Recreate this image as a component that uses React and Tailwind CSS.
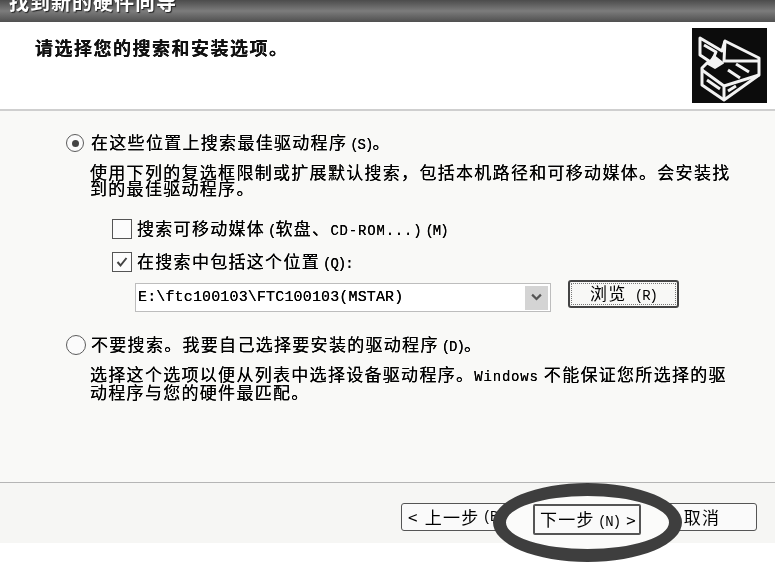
const CJK = "font-['Noto_Sans_CJK_SC','Liberation_Sans',sans-serif]";
const COMBO = "font-['Liberation_Mono',monospace] text-[15px] leading-none tracking-[0.15px]";
const LATIN = "font-['Liberation_Mono',monospace] text-[14px] leading-none tracking-[0.8px]";
const KEY = "ml-[3px] font-['Liberation_Mono',monospace] text-[14px] leading-none tracking-[-1px]";

function Radio({ checked, big }) {
  return (
    <span className={`flex shrink-0 items-center justify-center rounded-full border-[1.5px] border-[#5c5c5c] bg-[#fbfbfb] ${big ? "size-[20px]" : "size-[18px]"}`}>
      {checked && <span className="size-[7px] rounded-full bg-[#444]" />}
    </span>
  );
}

function Checkbox({ checked }) {
  return (
    <span className="flex size-[20px] shrink-0 items-center justify-center border-[1.5px] border-[#555] bg-[#fcfcfc]">
      {checked && (
        <svg viewBox="0 0 14 14" className="size-[14px]" fill="none" stroke="#444" strokeWidth="2">
          <path d="M2.5 7l3 3.5 6-7.5" />
        </svg>
      )}
    </span>
  );
}

function WizardIcon() {
  return (
    <div className="size-[75px] bg-[#0c0c0c]">
      <svg viewBox="0 0 75 75" className="size-full" fill="none" stroke="#f2f2f2" strokeWidth="3" strokeLinejoin="round">
        <path d="M8 10l22 13 3-10 34 17v17L32 72 10 57V40l7-7-9-6z" />
        <path d="M12 17l12 7-3 7M33 13l-1 20 35 0" />
        <path d="M22 28l9 7-8 5-7-4z" fill="#f2f2f2" strokeWidth="2" />
        <path d="M10 42l22 16 35-11M32 58v14" />
        <path d="M15 52l13 9M36 63l8-5M36 42l12 8M44 36l13 8" />
      </svg>
    </div>
  );
}

export default function App() {
  return (
    <div className={`relative flex h-[563px] w-[775px] flex-col overflow-hidden bg-white text-[17px] leading-[16px] tracking-[1.3px] text-[#000] blur-[0.35px] [text-shadow:0_0_0.6px_#000] ${CJK}`}>
      <div className="flex h-[22px] shrink-0 items-start overflow-hidden bg-gradient-to-b from-[#4c4c4c] via-[#7c7c7c] to-[#505050] pl-[9px]">
        <span className="-mt-[8px] text-[20px] leading-[20px] font-bold tracking-[1px] whitespace-nowrap text-white [text-shadow:1px_1px_1px_#222]">找到新的硬件向导</span>
      </div>

      <div className="flex h-[89px] shrink-0 justify-between border-b-2 border-[#cfcfcf] pt-[6px] pr-[8px] pl-[35px]">
        <h1 className="mt-[10px] text-[18px] leading-[18px] font-bold tracking-[1.5px] text-[#111]">请选择您的搜索和安装选项。</h1>
        <WizardIcon />
      </div>

      <div className="flex h-[371px] shrink-0 flex-col bg-[#f9f9f7] pt-[23px] pr-[40px] pl-[66px]">
        <div className="flex h-[18px] items-center gap-[7px]">
          <Radio checked />
          <span>在这些位置上搜索最佳驱动程序<span className={KEY}>(S)</span>。</span>
        </div>
        <p className="mt-[12px] ml-[24px] pr-[2px]">使用下列的复选框限制或扩展默认搜索，包括本机路径和可移动媒体。会安装找到的最佳驱动程序。</p>

        <div className="mt-[23px] ml-[46px] flex h-[20px] items-center gap-[5px]">
          <Checkbox />
          <span>搜索可移动媒体<span className={KEY}>(</span>软盘、<span className={LATIN}>CD-ROM...)</span><span className={KEY}>(M)</span></span>
        </div>
        <div className="mt-[13px] ml-[46px] flex h-[20px] items-center gap-[5px]">
          <Checkbox checked />
          <span>在搜索中包括这个位置<span className={KEY}>(Q):</span></span>
        </div>

        <div className="mt-[11px] ml-[69px] flex items-start gap-[17px]">
          <div className="flex h-[29px] w-[416px] items-center justify-between border border-[#bdbdbd] bg-white pr-[2px] pl-[2px]">
            <span className={COMBO}>E:\ftc100103\FTC100103(MSTAR)</span>
            <span className="flex h-[24px] w-[23px] items-center justify-center bg-[#d4d4d4]">
              <svg viewBox="0 0 10 8" className="w-[11px]" fill="none" stroke="#555" strokeWidth="2">
                <path d="M1 1.5l4 4 4-4" />
              </svg>
            </span>
          </div>
          <button className="-mt-[3px] h-[28px] w-[111px] rounded-[3px] border-2 border-[#444] bg-[#f8f8f6] outline outline-dotted outline-1 -outline-offset-4 outline-[#777]">
            浏览 <span className={KEY}>(R)</span>
          </button>
        </div>

        <div className="mt-[23px] flex h-[20px] items-center gap-[5px]">
          <Radio big />
          <span>不要搜索。我要自己选择要安装的驱动程序<span className={KEY}>(D)</span>。</span>
        </div>
        <p className="mt-[11px] ml-[24px] pr-[2px]">选择这个选项以便从列表中选择设备驱动程序。<span className={LATIN}>Windows</span> 不能保证您所选择的驱动程序与您的硬件最匹配。</p>
      </div>

      <div className="flex h-[61px] shrink-0 items-start border-t border-[#b5b5b5] bg-[#f6f6f4] pt-[20px] pr-[18px] pl-[401px]">
        <button className="flex h-[28px] w-[140px] items-center rounded-[3px] border-[1.5px] border-[#555] bg-[#fafafa] pl-[6px] whitespace-nowrap">&lt;<span className="ml-[6px]">上一步</span><span className={KEY}>(B)</span></button>
        <button className="relative z-20 mt-[1px] ml-[-8px] flex h-[31px] w-[108px] items-center justify-between rounded-[2px] border-2 border-[#555] bg-[#fafafa] pr-[2px] pl-[5px] whitespace-nowrap"><span>下一步<span className={KEY}>(N)</span></span><span>&gt;</span></button>
        <button className="ml-auto flex h-[28px] w-[110px] items-center justify-center rounded-[3px] border-[1.5px] border-[#555] bg-[#fafafa]">取消</button>
      </div>

      <div className="absolute top-[483px] left-[493px] z-10 h-[79px] w-[189px] rounded-[50%] border-[13px] border-[#3e3e3e] bg-[#fbfbfa]" />
    </div>
  );
}
